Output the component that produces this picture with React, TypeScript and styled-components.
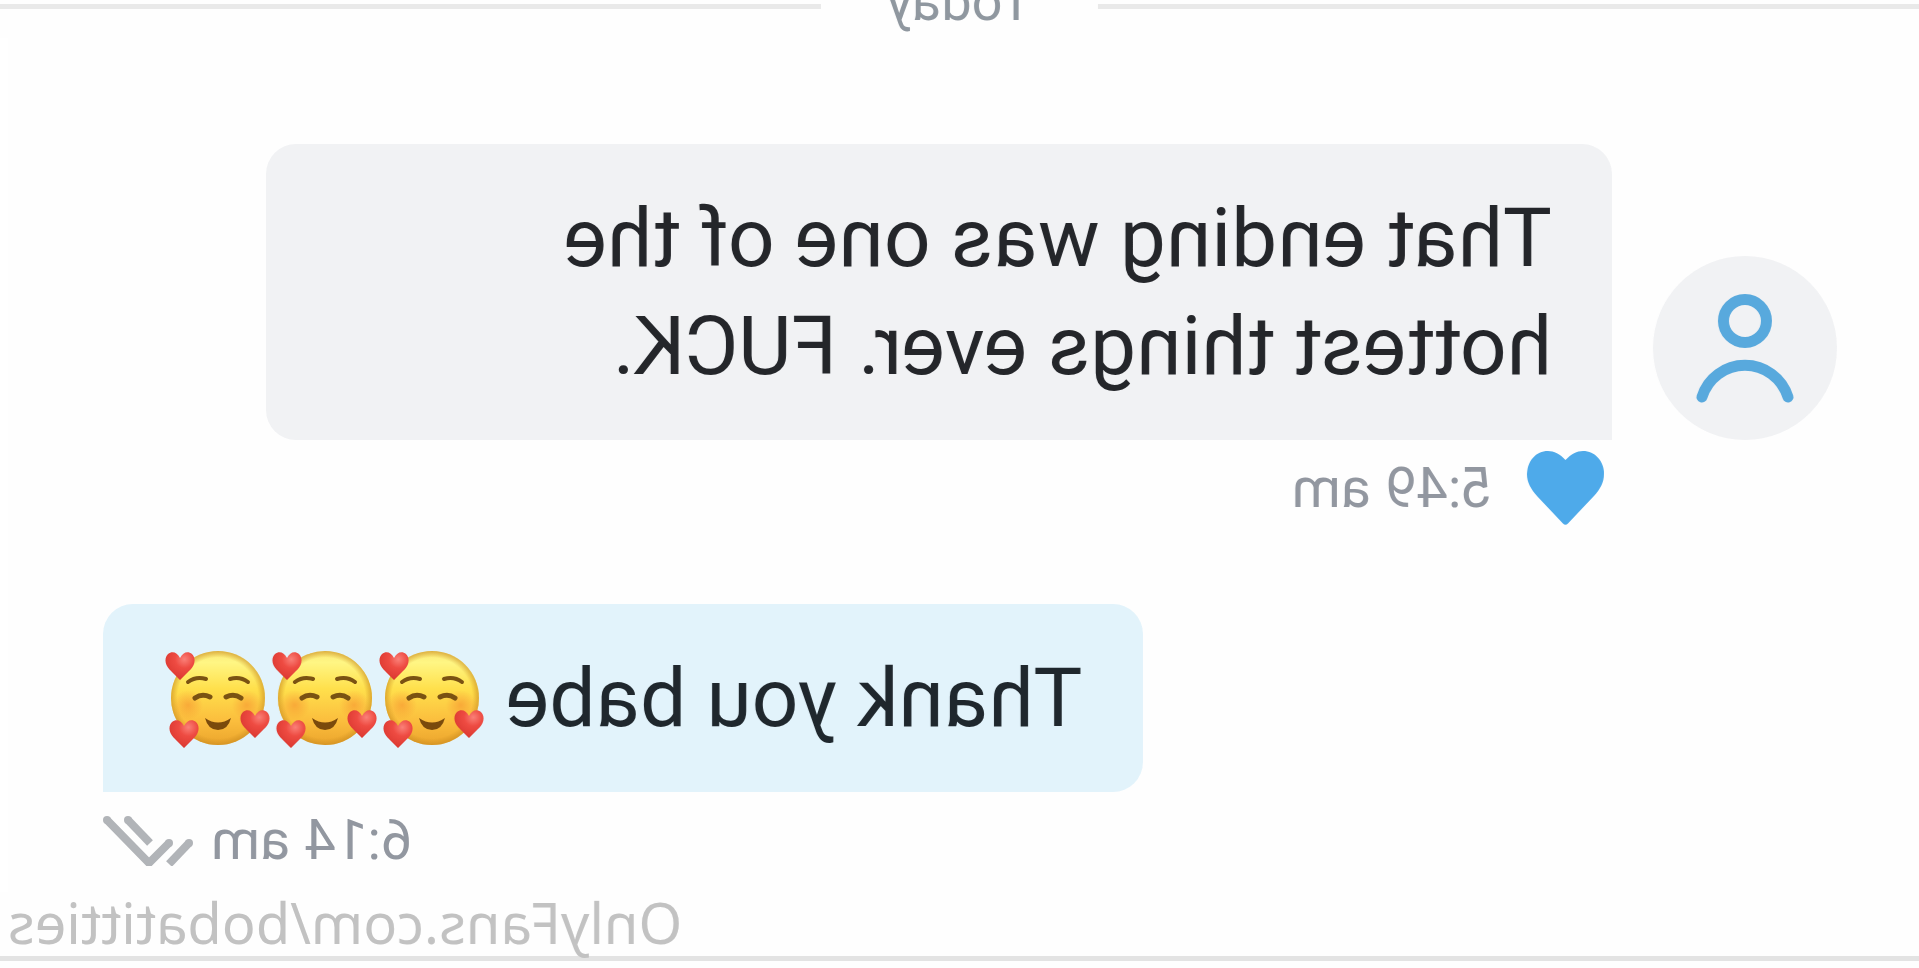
import React from "react";
import styled, { createGlobalStyle } from "styled-components";

const GlobalStyle = createGlobalStyle`
  * { box-sizing: border-box; }
  body {
    margin: 0;
    background: #fefefe;
    font-family: Roboto, "Liberation Sans", sans-serif;
    overflow-x: hidden;
  }
`;

/* The whole conversation is shown flipped, as seen by a front camera. */
const Mirror = styled.main`
  min-height: 100vh;
  display: flex;
  flex-direction: column;
  transform: scaleX(-1);
  overflow: hidden;
`;

const DayDivider = styled.header`
  display: flex;
  align-items: center;
  height: 64px;
  margin-top: -26px;
`;

const Rule = styled.span`
  flex: 1;
  height: 5px;
  background: #e9e9e9;
`;

const DayLabel = styled.h1`
  width: 277px;
  margin: 0;
  padding-bottom: 8px;
  text-align: center;
  font-size: 54px;
  line-height: 56px;
  font-weight: 400;
  color: #8f979f;
`;

const Thread = styled.section`
  flex: 1;
  display: flex;
  flex-direction: column;
  gap: 68px;
  padding: 106px 95px 0 82px;
  border-right: 8px solid #ffffff;
`;

const Message = styled.article<{ $own?: boolean }>`
  display: flex;
  flex-direction: column;
  align-items: ${(p) => (p.$own ? "flex-end" : "flex-start")};
`;

const BubbleRow = styled.div`
  display: flex;
  align-items: flex-end;
  gap: 41px;
`;

const Avatar = styled.div`
  width: 184px;
  height: 184px;
  flex: none;
  border-radius: 50%;
  background: #f1f2f4;
`;

const Bubble = styled.p<{ $own?: boolean }>`
  display: flex;
  align-items: center;
  margin: 0;
  max-width: 1346px;
  padding: 40px 64px 40px 60px;
  border-radius: ${(p) => (p.$own ? "30px 30px 0 30px" : "30px 30px 30px 0")};
  background: ${(p) => (p.$own ? "#e2f3fb" : "#f1f2f4")};
  color: ${(p) => (p.$own ? "#1f272d" : "#24262a")};
  font-size: 82px;
  line-height: 108px;
`;

const Faces = styled.span`
  display: flex;
  margin-left: 18px;
`;

const FaceIcon = styled.svg`
  width: 107px;
  height: 108px;
  overflow: visible;
`;

const Meta = styled.footer<{ $own?: boolean }>`
  display: flex;
  align-items: center;
  gap: ${(p) => (p.$own ? "18px" : "34px")};
  height: 96px;
  padding-left: ${(p) => (p.$own ? "0" : "233px")};
`;

const Time = styled.time`
  font-size: 56px;
  line-height: 64px;
  color: #9297a0;
`;

const Watermark = styled.footer`
  margin-bottom: 7px;
  padding-right: 8px;
  border-bottom: 5px solid #e3e3e3;
  text-align: right;
`;

const ProfileLink = styled.a`
  display: block;
  padding-bottom: 4px;
  color: #c2c2c2;
  font-family: "Noto Sans", "Open Sans", sans-serif;
  font-size: 56px;
  line-height: 60px;
  text-decoration: none;
`;

const Person = () => (
  <svg viewBox="0 0 184 184" width="184" height="184" fill="none" stroke="#58a9dd" strokeWidth="11" strokeLinecap="round" aria-hidden="true">
    <circle cx="92" cy="65" r="21.5" />
    <path d="M49 141A45 45 0 0 1 135 141" />
  </svg>
);

const Liked = () => (
  <svg viewBox="0 0 77 74" width="77" height="74" role="img" aria-label="Liked">
    <path fill="#4eaaea" d="M38.5 9C33 3 27 0 21 0C9 0 0 10 0 23C0 32 4 38 10 45L36 72.500Q38.5 75 41 72.500L67 45C73 38 77 32 77 23C77 10 68 0 56 0C50 0 44 3 38.5 9Z" />
  </svg>
);

const Read = () => (
  <svg viewBox="0 0 90 52" width="90" height="52" fill="none" stroke="#b1b4b8" strokeWidth="8" role="img" aria-label="Read">
    <path d="M24 29L44 49L86 6" />
    <path d="M43 29L65 6" />
    <path d="M4 29L24 50" />
    <g fill="#b1b4b8" stroke="none">
      <circle cx="86" cy="6" r="4" />
      <circle cx="65" cy="6" r="4" />
      <circle cx="24" cy="29" r="4" />
      <circle cx="4" cy="29" r="4" />
    </g>
  </svg>
);

const heart = "M0 -7C-3 -13 -8 -14 -12 -11C-17 -6 -14 2 -9 6L0 15L9 6C14 2 17 -6 12 -11C8 -14 3 -13 0 -7Z";

const Face = () => (
  <FaceIcon viewBox="0 0 107 108" role="img" aria-label="Smiling face with hearts">
    <defs>
      <linearGradient id="skin" x1="0" y1="0" x2="0" y2="1">
        <stop offset="0" stopColor="#fbe774" />
        <stop offset=".12" stopColor="#fff684" />
        <stop offset=".4" stopColor="#ffe04c" />
        <stop offset=".75" stopColor="#fbbd3d" />
        <stop offset="1" stopColor="#eba52c" />
      </linearGradient>
      <radialGradient id="rim">
        <stop offset=".86" stopColor="#c98a1e" stopOpacity="0" />
        <stop offset="1" stopColor="#c98a1e" stopOpacity=".6" />
      </radialGradient>
      <radialGradient id="blush">
        <stop offset="0" stopColor="#f5862c" stopOpacity=".5" />
        <stop offset="1" stopColor="#f5862c" stopOpacity="0" />
      </radialGradient>
      <radialGradient id="love" cx=".35" cy=".25" r=".8">
        <stop offset="0" stopColor="#fa8078" />
        <stop offset=".4" stopColor="#ee4b42" />
        <stop offset="1" stopColor="#d9362f" />
      </radialGradient>
    </defs>
    <circle cx="56" cy="54" r="47" fill="url(#skin)" />
    <circle cx="56" cy="54" r="47" fill="url(#rim)" />
    <circle cx="27" cy="61" r="15" fill="url(#blush)" />
    <circle cx="86" cy="61" r="15" fill="url(#blush)" />
    <g fill="none" stroke="#7a5212" strokeWidth="4" strokeLinecap="round">
      <path d="M26 38Q34 32 44 35" />
      <path d="M68 35Q78 32 86 38" />
      <path strokeWidth="5" d="M33 54Q40 49 48 53" />
      <path strokeWidth="5" d="M64 53Q72 49 79 54" />
    </g>
    <path fill="#7a4a0c" d="M43 74Q56 83 69 74Q66 86 56 86Q46 86 43 74Z" />
    <g fill="url(#love)">
      <path transform="translate(94 21)" d={heart} />
      <path transform="translate(19 79)" d={heart} />
      <path transform="translate(90 89)" d={heart} />
    </g>
  </FaceIcon>
);

export default function App() {
  return (
    <>
      <GlobalStyle />
      <Mirror>
        <DayDivider>
          <Rule />
          <DayLabel>Today</DayLabel>
          <Rule />
        </DayDivider>
        <Thread>
          <Message>
            <BubbleRow>
              <Avatar>
                <Person />
              </Avatar>
              <Bubble>That ending was one of the hottest things ever. FUCK.</Bubble>
            </BubbleRow>
            <Meta>
              <Liked />
              <Time dateTime="05:49">5:49 am</Time>
            </Meta>
          </Message>
          <Message $own>
            <Bubble $own>
              Thank you babe
              <Faces>
                <Face />
                <Face />
                <Face />
              </Faces>
            </Bubble>
            <Meta $own>
              <Time dateTime="06:14">6:14 am</Time>
              <Read />
            </Meta>
          </Message>
        </Thread>
        <Watermark>
          <ProfileLink href="#profile">OnlyFans.com/bobatitties</ProfileLink>
        </Watermark>
      </Mirror>
    </>
  );
}
